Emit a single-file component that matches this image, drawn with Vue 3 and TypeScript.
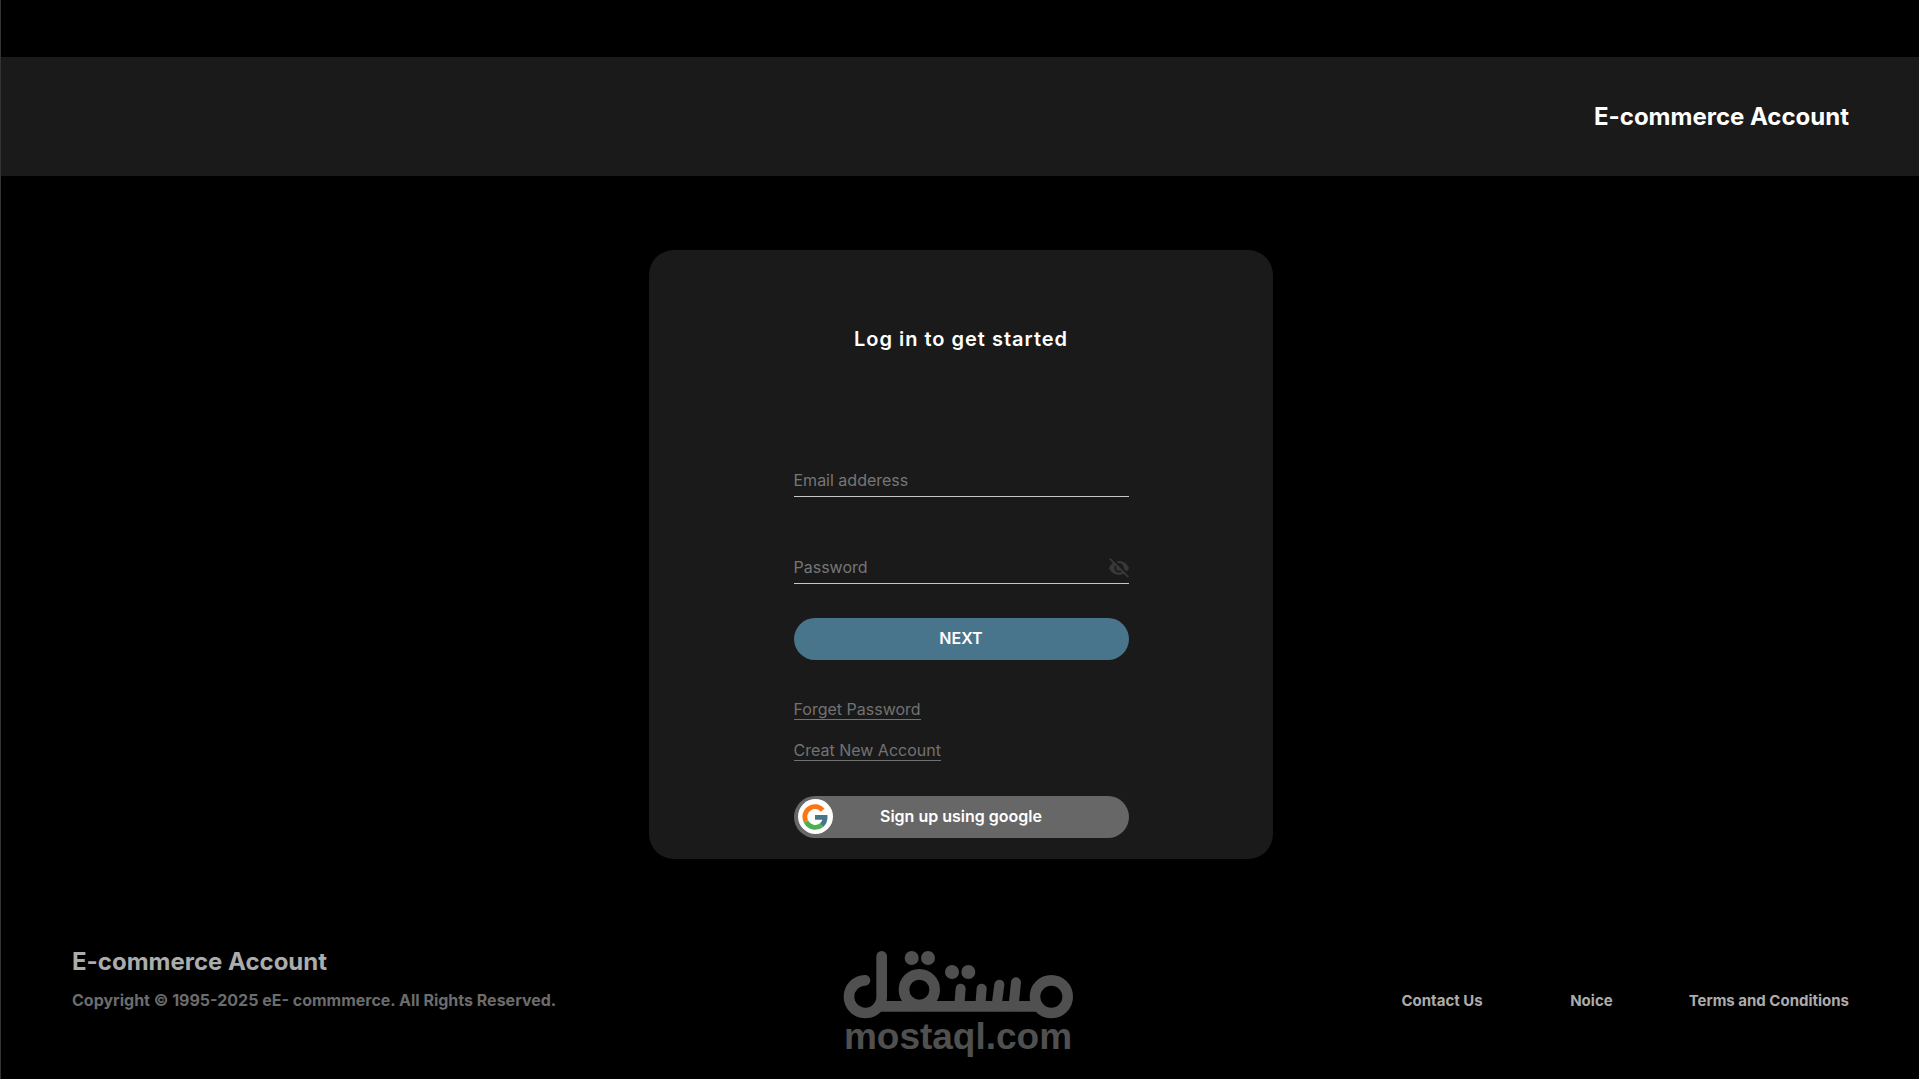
<script setup lang="ts">
import { ref } from 'vue'

const email = ref('')
const password = ref('')
const showPassword = ref(false)

const footerLinks: string[] = ['Contact Us', 'Noice', 'Terms and Conditions']
</script>

<template>
  <div class="page">
    <header class="header">
      <span class="brand">E-commerce Account</span>
    </header>

    <main class="main">
      <section class="card">
        <h1 class="title">Log in to get started</h1>
        <form class="form" @submit.prevent>
          <div class="field">
            <input v-model="email" type="email" placeholder="Email adderess" aria-label="Email adderess" />
          </div>
          <div class="field">
            <input
              v-model="password"
              :type="showPassword ? 'text' : 'password'"
              placeholder="Password"
              aria-label="Password"
            />
            <button type="button" class="eye" aria-label="Toggle password visibility" @click="showPassword = !showPassword">
              <svg viewBox="0 0 20 20" width="20" height="20" aria-hidden="true">
                <path
                  fill="#383838"
                  fill-rule="evenodd"
                  d="M10 3C5.500 3 1.700 5.900 0 10c1.700 4.100 5.500 6.800 10 6.800s8.300-2.700 10-6.800C18.300 5.900 14.500 3 10 3zm0 2.200a4.700 4.700 0 1 1 0 9.400 4.700 4.700 0 0 1 0-9.400zm0 1.900a2.800 2.800 0 1 0 0 5.600 2.800 2.800 0 0 0 0-5.600z"
                />
                <path d="M2.200-.6 20.800 18" stroke="#1a1a1a" stroke-width="2" />
                <path d="M.8.600 19.400 19.200" stroke="#383838" stroke-width="1.700" />
              </svg>
            </button>
          </div>
          <button type="submit" class="pill next">NEXT</button>
          <nav class="help">
            <a href="#">Forget Password</a>
            <a href="#">Creat New Account</a>
          </nav>
          <button type="button" class="pill google">
            <span class="badge">
              <svg viewBox="0 0 26 26" width="26" height="26" aria-hidden="true">
                <g fill="none" stroke-width="4.800">
                  <path d="M20.600 6.200A10.100 10.100 0 0 0 4 17.500" stroke="#ff7412" />
                  <path d="M4 17.500A10.100 10.100 0 0 0 19.600 21.100" stroke="#4caf50" />
                  <path d="M19.600 21.100A10.100 10.100 0 0 0 23.100 13.300H13" stroke="#49758c" />
                </g>
              </svg>
            </span>
            Sign up using google
          </button>
        </form>
      </section>
    </main>

    <footer class="footer">
      <div class="about">
        <strong class="brand">E-commerce Account</strong>
        <p class="copyright">Copyright © 1995-2025 eE- commmerce. All Rights Reserved.</p>
      </div>
      <div class="mark">
        <svg viewBox="72 63 690 204" width="230" height="68" role="img" aria-label="مستقل">
          <g fill="none" stroke="#505050" stroke-width="32" stroke-linecap="round">
            <path d="M138 151A49 49 0 1 0 188 200V79" />
            <path d="M178 229H658" stroke-linecap="butt" />
            <circle cx="301" cy="179" r="46" />
            <circle cx="697" cy="200" r="49" />
            <path d="M425 176 421 225M488 176 484 225M541 164 533 225M591 157 584 225" stroke-width="30" />
          </g>
          <g fill="#505050">
            <circle cx="278" cy="84" r="21" />
            <circle cx="327" cy="84" r="21" />
            <circle cx="399" cy="126" r="21" />
            <circle cx="448" cy="126" r="21" />
          </g>
        </svg>
        <span class="domain">mostaql.com</span>
      </div>
      <nav class="links">
        <a v-for="link in footerLinks" :key="link" href="#">{{ link }}</a>
      </nav>
    </footer>
  </div>
</template>

<style>
body {
  margin: 0;
  background: #000;
}
</style>

<style scoped>
.page {
  box-sizing: border-box;
  min-height: 100vh;
  padding-top: 57px;
  border-left: 1px solid #333;
  display: flex;
  flex-direction: column;
  background: #000;
  color: #fff;
  font-family: Inter, 'Liberation Sans', sans-serif;
  font-size: 16px;
}

.header {
  display: flex;
  align-items: center;
  justify-content: flex-end;
  padding: 45px 70px 44px;
  background: #1a1a1a;
}

.brand {
  font-size: 24px;
  line-height: 30px;
  font-weight: 700;
}

.main {
  display: flex;
  justify-content: center;
  padding: 74px 24px 91px 26px;
}

.card {
  box-sizing: border-box;
  width: 100%;
  max-width: 624px;
  padding: 77px 24px 21px;
  border-radius: 25px;
  background: #1a1a1a;
}

.title {
  margin: 0 0 115px;
  font-size: 20px;
  line-height: 24px;
  font-weight: 600;
  letter-spacing: 1px;
  text-align: center;
}

.form {
  display: flex;
  flex-direction: column;
  max-width: 335px;
  margin: 0 auto;
}

.field {
  display: flex;
  align-items: center;
  height: 30px;
  border-bottom: 1px solid #c8c8c8;
}

.field + .field {
  margin-top: 56px;
}

.field input {
  flex: 1;
  min-width: 0;
  height: 28px;
  padding: 0 0 2px;
  border: 0;
  outline: 0;
  background: none;
  color: #fff;
  font: inherit;
}

.field input::placeholder {
  color: #767676;
  opacity: 1;
}

.eye {
  display: flex;
  padding: 0;
  border: 0;
  background: none;
  cursor: pointer;
}

.eye svg {
  overflow: visible;
}

.pill {
  position: relative;
  height: 42px;
  padding: 0 0 2px;
  border: 0;
  border-radius: 21px;
  color: #fff;
  font: inherit;
  font-weight: 600;
  cursor: pointer;
}

.next {
  margin-top: 34px;
  background: #49758c;
}

.google {
  margin-top: 35px;
  background: #676767;
}

.badge {
  position: absolute;
  top: 3px;
  left: 4px;
  display: grid;
  place-items: center;
  width: 35px;
  height: 35px;
  border-radius: 50%;
  background: #fff;
}

.help {
  display: flex;
  flex-direction: column;
  align-items: flex-start;
  gap: 20px;
  margin-top: 39px;
}

.help a {
  border-bottom: 1px solid #727272;
  color: #727272;
  line-height: 20px;
  text-decoration: none;
}

.footer {
  display: grid;
  grid-template-columns: 1fr auto 1fr;
  padding: 0 70px 20px 71px;
}

.about .brand {
  display: block;
  color: #acacac;
  line-height: 24px;
}

.copyright {
  margin: 16px 0 0;
  color: #6c6c6c;
  line-height: 20px;
  font-weight: 700;
}

.mark {
  display: flex;
  flex-direction: column;
  align-items: center;
  padding: 1px 5px 0 0;
  color: #505050;
}

.domain {
  font: bold 37px/36px 'Liberation Sans', sans-serif;
}

.links {
  display: flex;
  justify-content: flex-end;
  gap: 76px;
  padding-top: 41px;
}

.links a {
  min-width: 54px;
  color: #acacac;
  font-size: 15px;
  line-height: 20px;
  font-weight: 700;
  text-align: right;
  text-decoration: none;
}
</style>
